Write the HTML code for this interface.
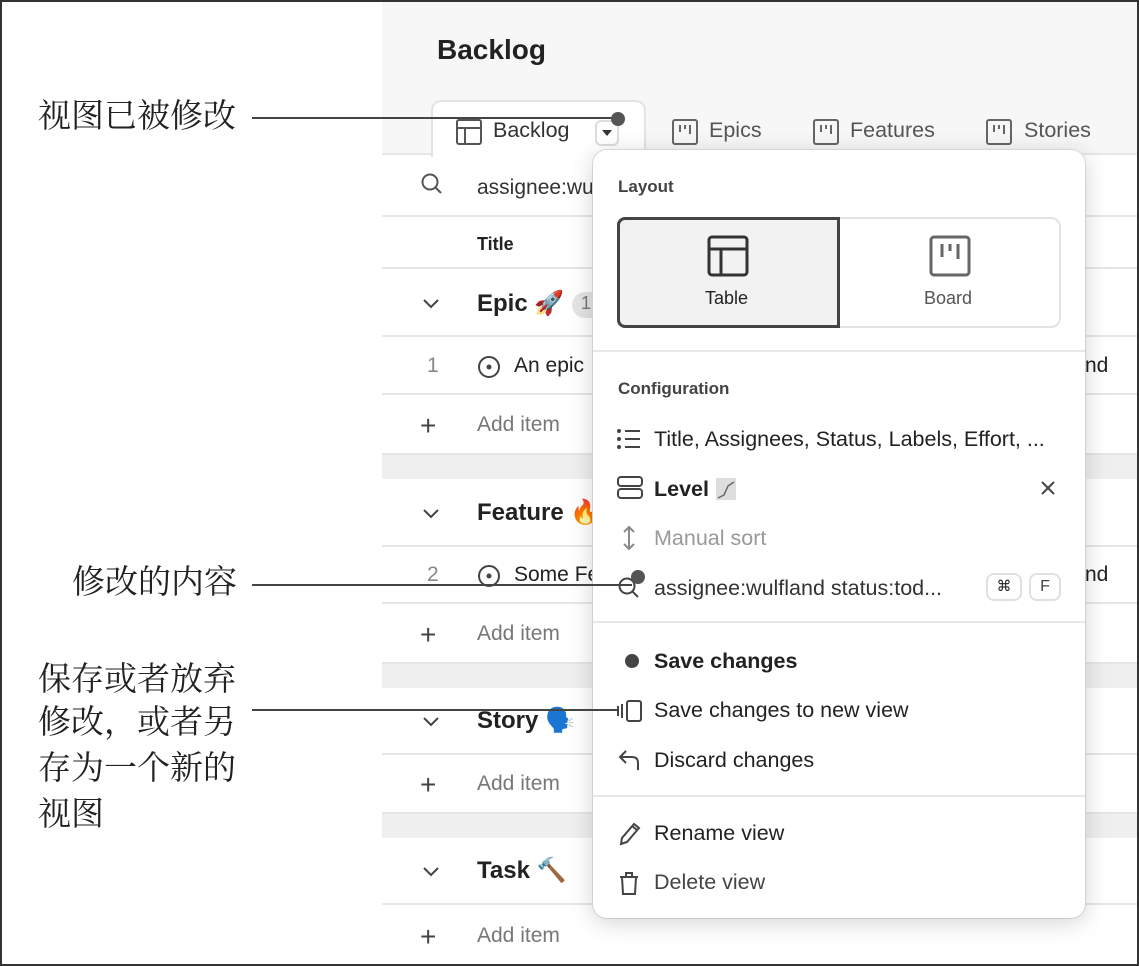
<!DOCTYPE html>
<html><head><meta charset="utf-8"><style>
*{margin:0;padding:0;box-sizing:border-box}
body{width:1139px;height:966px;position:relative;background:#fff;font-family:"Liberation Sans",sans-serif;overflow:hidden;color:#222}
.frame{position:absolute;left:0;top:0;width:1139px;height:966px;border:2px solid #333;z-index:50;pointer-events:none}
.a{position:absolute}
.cn{position:absolute;font-family:"Liberation Serif","Noto Serif CJK SC",serif;font-size:33px;color:#222;line-height:46px;white-space:nowrap}
.hl{position:absolute;height:2px;background:#444;z-index:30}
.dot{position:absolute;width:14px;height:14px;border-radius:50%;background:#555;z-index:31}
.app{position:absolute;left:382px;top:2px;width:755px;height:962px;background:#fff;overflow:hidden}
.row{position:absolute;left:0;width:755px;border-bottom:2px solid #e6e6e6;background:#fff}
.band{position:absolute;left:0;width:755px;background:#efefef}
.t{position:absolute;font-size:21px;white-space:nowrap}
.g{color:#777}
.b{font-weight:bold}
.pop{position:absolute;left:593px;top:150px;width:492px;height:768px;background:#fff;border-radius:14px;box-shadow:0 4px 24px rgba(0,0,0,.18),0 0 0 1px #e4e4e4;z-index:20}
.pop .t{font-size:21.5px}
.div{position:absolute;left:0;width:492px;height:2px;background:#e8e8e8}
svg{position:absolute}
</style></head><body>
<div class="frame"></div>

<div class="cn" style="left:38px;top:94px">视图已被修改</div>
<div class="cn" style="left:72px;top:560px">修改的内容</div>
<div class="cn" style="left:38px;top:657px">保存或者放弃</div>
<div class="cn" style="left:38px;top:700px">修改，或者另</div>
<div class="cn" style="left:38px;top:746px">存为一个新的</div>
<div class="cn" style="left:38px;top:792px">视图</div>
<div class="hl" style="left:252px;top:117px;width:365px"></div>
<div class="dot" style="left:611px;top:112px"></div>
<div class="hl" style="left:252px;top:584px;width:380px"></div>
<div class="dot" style="left:631px;top:570px"></div>
<div class="hl" style="left:252px;top:709px;width:366px"></div>

<div class="app">
 <div class="a" style="left:0;top:0;width:755px;height:153px;background:#f7f7f7;border-bottom:2px solid #e6e6e6"></div>
 <div class="t b" style="left:55px;top:32px;font-size:28px;color:#222">Backlog</div>
 <div class="a" style="left:49px;top:98px;width:215px;height:57px;background:#fff;border:2px solid #e3e3e3;border-bottom:none;border-radius:10px 10px 0 0"></div>
 <svg style="left:74px;top:117px" width="26" height="26" viewBox="0 0 26 26" fill="none" stroke="#555" stroke-width="2"><rect x="1" y="1" width="24" height="24" rx="2"/><path d="M1 9H25M9 9V25"/></svg>
 <div class="t" style="left:111px;top:116px;color:#333;font-size:21.5px">Backlog</div>
 <div class="a" style="left:213px;top:118px;width:24px;height:26px;border:2px solid #ddd;border-radius:6px"></div>
 <svg style="left:220px;top:128px" width="10" height="8"><path d="M0 0H10L5 6Z" fill="#333"/></svg>
 <svg style="left:290px;top:117px" width="26" height="26" viewBox="0 0 26 26" fill="none" stroke="#666" stroke-width="2"><rect x="1" y="1" width="24" height="24" rx="2"/><path d="M8 6V13M13 6V10M18 6V15"/></svg>
 <div class="t g" style="left:327px;top:116px;color:#555;font-size:21.5px">Epics</div>
 <svg style="left:431px;top:117px" width="26" height="26" viewBox="0 0 26 26" fill="none" stroke="#666" stroke-width="2"><rect x="1" y="1" width="24" height="24" rx="2"/><path d="M8 6V13M13 6V10M18 6V15"/></svg>
 <div class="t" style="left:468px;top:116px;color:#555;font-size:21.5px">Features</div>
 <svg style="left:604px;top:117px" width="26" height="26" viewBox="0 0 26 26" fill="none" stroke="#666" stroke-width="2"><rect x="1" y="1" width="24" height="24" rx="2"/><path d="M8 6V13M13 6V10M18 6V15"/></svg>
 <div class="t" style="left:642px;top:116px;color:#555;font-size:21.5px">Stories</div>

 <div class="row" style="top:155px;height:60px"></div>
 <svg style="left:38px;top:170px" width="24" height="24" fill="none" stroke="#555" stroke-width="2"><circle cx="10" cy="10" r="7.5"/><path d="M15.5 15.5L21 21"/></svg>
 <div class="t" style="left:95px;top:174px;color:#333">assignee:wulfland</div>
 <div class="row" style="top:215px;height:52px"></div>
 <div class="t b" style="left:95px;top:232px;font-size:18px">Title</div>

 <div class="row" style="top:267px;height:68px"></div>
 <svg style="left:40px;top:296px" width="18" height="12" fill="none" stroke="#444" stroke-width="2"><path d="M2 2L9 9L16 2"/></svg>
 <div class="t b" style="left:95px;top:287px;font-size:24px">Epic 🚀</div>
 <div class="a" style="left:190px;top:290px;width:30px;height:26px;border-radius:13px;background:#e4e4e4"></div>
 <div class="t g" style="left:199px;top:291px;font-size:18px">1</div>
 <div class="row" style="top:335px;height:58px"></div>
 <div class="t g" style="left:45px;top:352px;color:#888">1</div>
 <svg style="left:95px;top:353px" width="24" height="24" fill="none" stroke="#444" stroke-width="2"><circle cx="12" cy="12" r="10"/><circle cx="12" cy="12" r="1.5" fill="#444"/></svg>
 <div class="t" style="left:132px;top:352px">An epic</div>
 <div class="t" style="left:703px;top:352px">nd</div>
 <div class="row" style="top:393px;height:60px"></div>
 <div class="t" style="left:38px;top:408px;font-size:28px;color:#444">+</div>
 <div class="t g" style="left:95px;top:411px">Add item</div>
 <div class="band" style="top:453px;height:24px"></div>

 <div class="row" style="top:477px;height:68px"></div>
 <svg style="left:40px;top:506px" width="18" height="12" fill="none" stroke="#444" stroke-width="2"><path d="M2 2L9 9L16 2"/></svg>
 <div class="t b" style="left:95px;top:496px;font-size:24px">Feature 🔥</div>
 <div class="row" style="top:545px;height:57px"></div>
 <div class="t g" style="left:45px;top:561px;color:#888">2</div>
 <svg style="left:95px;top:562px" width="24" height="24" fill="none" stroke="#444" stroke-width="2"><circle cx="12" cy="12" r="10"/><circle cx="12" cy="12" r="1.5" fill="#444"/></svg>
 <div class="t" style="left:132px;top:561px">Some Feature</div>
 <div class="t" style="left:703px;top:561px">nd</div>
 <div class="row" style="top:602px;height:60px"></div>
 <div class="t" style="left:38px;top:617px;font-size:28px;color:#444">+</div>
 <div class="t g" style="left:95px;top:620px">Add item</div>
 <div class="band" style="top:662px;height:24px"></div>

 <div class="row" style="top:686px;height:67px"></div>
 <svg style="left:40px;top:714px" width="18" height="12" fill="none" stroke="#444" stroke-width="2"><path d="M2 2L9 9L16 2"/></svg>
 <div class="t b" style="left:95px;top:704px;font-size:24px">Story 🗣️</div>
 <div class="row" style="top:753px;height:59px"></div>
 <div class="t" style="left:38px;top:767px;font-size:28px;color:#444">+</div>
 <div class="t g" style="left:95px;top:770px">Add item</div>
 <div class="band" style="top:812px;height:24px"></div>

 <div class="row" style="top:836px;height:67px"></div>
 <svg style="left:40px;top:864px" width="18" height="12" fill="none" stroke="#444" stroke-width="2"><path d="M2 2L9 9L16 2"/></svg>
 <div class="t b" style="left:95px;top:854px;font-size:24px">Task 🔨</div>
 <div class="t" style="left:38px;top:919px;font-size:28px;color:#444">+</div>
 <div class="t g" style="left:95px;top:922px">Add item</div>
</div>

<div class="pop">
 <div class="t b" style="left:25px;top:27px;font-size:17px;color:#444">Layout</div>
 <div class="a" style="left:24px;top:67px;width:444px;height:111px;border:2px solid #e3e3e3;border-radius:10px"></div>
 <div class="a" style="left:24px;top:67px;width:223px;height:111px;border:3px solid #444;border-radius:8px 0 0 8px;background:#f2f2f2"></div>
 <svg style="left:114px;top:85px" width="42" height="42" viewBox="0 0 42 42" fill="none" stroke="#333" stroke-width="3"><rect x="2" y="2" width="38" height="38" rx="3"/><path d="M2 14H40M14 14V40"/></svg>
 <div class="t" style="left:112px;top:138px;font-size:18px">Table</div>
 <svg style="left:336px;top:85px" width="42" height="42" viewBox="0 0 42 42" fill="none" stroke="#666" stroke-width="3"><rect x="2" y="2" width="38" height="38" rx="3"/><path d="M13 9V22M21 9V16M29 9V24"/></svg>
 <div class="t" style="left:331px;top:138px;font-size:18px;color:#555">Board</div>
 <div class="div" style="top:200px"></div>
 <div class="t b" style="left:25px;top:229px;font-size:17px;color:#444">Configuration</div>
 <svg style="left:24px;top:278px" width="24" height="22" fill="none" stroke="#444" stroke-width="2"><path d="M8 3H23M8 11H23M8 19H23"/><circle cx="2" cy="3" r="1" fill="#444"/><circle cx="2" cy="11" r="1" fill="#444"/><circle cx="2" cy="19" r="1" fill="#444"/></svg>
 <div class="t" style="left:61px;top:277px">Title, Assignees, Status, Labels, Effort, ...</div>
 <svg style="left:24px;top:326px" width="26" height="24" fill="none" stroke="#444" stroke-width="2"><rect x="1" y="1" width="24" height="9" rx="3"/><rect x="1" y="13" width="24" height="9" rx="3"/></svg>
 <div class="t b" style="left:61px;top:327px">Level</div>
 <div class="a" style="left:123px;top:328px;width:20px;height:22px;background:#ddd"></div>
 <svg style="left:123px;top:328px" width="20" height="22" fill="none" stroke="#666" stroke-width="1.5"><path d="M2 20L8 17L12 8L18 4"/></svg>
 <svg style="left:447px;top:330px" width="16" height="16" stroke="#444" stroke-width="2"><path d="M2 2L14 14M14 2L2 14"/></svg>
 <svg style="left:28px;top:375px" width="16" height="26" fill="none" stroke="#888" stroke-width="2"><path d="M8 2V24M3 7L8 2L13 7M3 19L8 24L13 19"/></svg>
 <div class="t" style="left:61px;top:376px;color:#999">Manual sort</div>
 <svg style="left:24px;top:424px" width="26" height="26" fill="none" stroke="#444" stroke-width="2"><circle cx="10" cy="12" r="7.5"/><path d="M15.5 17.5L21 23"/></svg>
 <div class="t" style="left:61px;top:426px;color:#333">assignee:wulfland status:tod...</div>
 <div class="a" style="left:393px;top:423px;width:36px;height:28px;border:2px solid #e0e0e0;border-radius:8px;font-size:15px;text-align:center;line-height:24px">⌘</div>
 <div class="a" style="left:436px;top:423px;width:32px;height:28px;border:2px solid #e0e0e0;border-radius:8px;font-size:16px;text-align:center;line-height:24px;color:#444">F</div>
 <div class="div" style="top:471px"></div>
 <div class="a" style="left:32px;top:504px;width:14px;height:14px;border-radius:50%;background:#444"></div>
 <div class="t b" style="left:61px;top:499px">Save changes</div>
 <svg style="left:23px;top:550px" width="28" height="22" fill="none" stroke="#444" stroke-width="2"><path d="M2 6V16M6 4V18"/><rect x="11" y="1" width="14" height="20" rx="2"/></svg>
 <div class="t" style="left:61px;top:548px">Save changes to new view</div>
 <svg style="left:25px;top:598px" width="24" height="24" fill="none" stroke="#444" stroke-width="2"><path d="M8 3L2 9L8 15M2 9H14Q20 9 20 15V22"/></svg>
 <div class="t" style="left:61px;top:598px">Discard changes</div>
 <div class="div" style="top:645px"></div>
 <svg style="left:25px;top:671px" width="24" height="26" fill="none" stroke="#444" stroke-width="2"><path d="M3 23L4 17L16 3L21 7L9 21Z M14 5L19 9"/></svg>
 <div class="t" style="left:61px;top:671px">Rename view</div>
 <svg style="left:26px;top:720px" width="20" height="26" fill="none" stroke="#444" stroke-width="2"><path d="M1 7H19M7 7V3H13V7M3 7L4 24H16L17 7"/></svg>
 <div class="t" style="left:61px;top:720px;color:#444">Delete view</div>
</div>
</body></html>
